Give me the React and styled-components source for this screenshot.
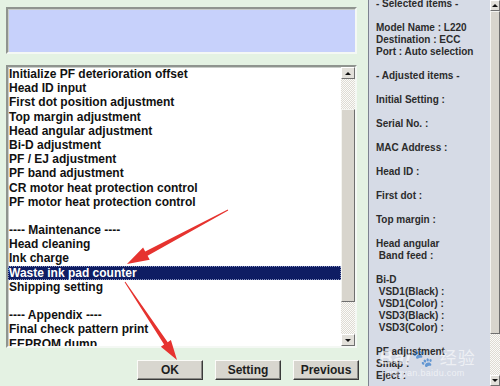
import React from "react";
import styled, { createGlobalStyle } from "styled-components";

const GlobalStyle = createGlobalStyle`
  html, body {
    margin: 0;
    padding: 0;
    background: #e4f2e3;
  }
  body {
    font-family: "Liberation Sans", Arial, sans-serif;
  }
`;

const Window = styled.div`
  position: relative;
  display: flex;
  width: 500px;
  height: 386px;
  overflow: hidden;
`;

const LeftPane = styled.div`
  width: 368px;
  box-sizing: border-box;
  padding: 7px 11px 0 6px;
  background: #e4f2e3;
  display: flex;
  flex-direction: column;
`;

const sunken = `
  border-style: solid;
  border-width: 2px;
  border-color: #8f948f #f4f8f4 #f4f8f4 #8f948f;
  box-shadow: inset 1px 1px 0 #c9cdc9;
`;

const MessageBox = styled.div`
  height: 47px;
  box-sizing: border-box;
  background: #c7d1fb;
  ${sunken}
`;

const ListBox = styled.div`
  margin-top: 11px;
  height: 283px;
  box-sizing: border-box;
  background: #fff;
  display: flex;
  ${sunken}
`;

const Items = styled.div`
  flex: 1;
  overflow: hidden;
`;

const Item = styled.div`
  height: 14.2px;
  line-height: 14.2px;
  font-size: 12px;
  font-weight: bold;
  padding-left: 1px;
  white-space: nowrap;
  background: ${(p) => (p.selected ? "#0f1d63" : "transparent")};
  color: ${(p) => (p.selected ? "#fff" : "#111")};
  outline: ${(p) => (p.selected ? "1px dotted #8a94c0" : "none")};
  outline-offset: -1px;
`;

const ScrollBar = styled.div`
  width: ${(p) => p.w || 14}px;
  display: flex;
  flex-direction: column;
  background: repeating-conic-gradient(#dedbd3 0 25%, #fbfbf9 0 50%) 0 0 / 2px 2px;
  flex-shrink: 0;
`;

const ArrowBtn = styled.div`
  height: ${(p) => p.h || 12}px;
  box-sizing: border-box;
  background: #e2e0da;
  border: 1px solid;
  border-color: #fff #707070 #707070 #fff;
  display: flex;
  align-items: center;
  justify-content: center;
  &::after {
    content: "";
    border-left: 3px solid transparent;
    border-right: 3px solid transparent;
    ${(p) => (p.down ? "border-top" : "border-bottom")}: 3px solid #111;
  }
`;

const Spacer = styled.div`
  height: ${(p) => p.h}px;
  flex-shrink: 0;
`;

const Thumb = styled.div`
  height: ${(p) => p.h}px;
  box-sizing: border-box;
  background: #d8d5cd;
  border: 1px solid;
  border-color: #f4f4f0 #6f6f6f #6f6f6f #f4f4f0;
  flex-shrink: 0;
`;

const ButtonRow = styled.div`
  display: flex;
  justify-content: flex-end;
  gap: 12px;
  margin-top: 12px;
  margin-right: -2px;
`;

const Button = styled.div`
  width: 66px;
  height: 20px;
  box-sizing: border-box;
  background: #d8d6cf;
  border: 1px solid;
  border-color: #fbfbf8 #3a3a3a #3a3a3a #fbfbf8;
  box-shadow: inset -1px -1px 0 #8a8a86;
  display: flex;
  align-items: center;
  justify-content: center;
  font-size: 12px;
  font-weight: bold;
  color: #1e1e1e;
`;

const RightPane = styled.div`
  flex: 1;
  display: flex;
  border-left: 1px solid #7d8290;
  position: relative;
`;

const Info = styled.div`
  flex: 1;
  background: #d6dbe6;
  padding: 0 0 0 7px;
  overflow: hidden;
`;

const InfoText = styled.div`
  margin-top: -2px;
  font-size: 10px;
  line-height: 12px;
  font-weight: bold;
  color: #2c2c2c;
  white-space: pre;
`;

const Watermark = styled.div`
  position: absolute;
  left: 10px;
  top: 348px;
  color: rgba(255, 255, 255, 0.6);
  font-family: "Liberation Sans", "Noto Sans CJK SC", sans-serif;
  pointer-events: none;
  line-height: 1;
`;

const MarkBig = styled.div`
  font-size: 19px;
  font-weight: bold;
  font-style: italic;
  letter-spacing: 1px;
  span {
    font-style: normal;
    font-weight: normal;
    font-size: 17px;
  }
`;

const MarkSmall = styled.div`
  font-size: 9px;
  margin-top: 2px;
  padding-left: 8px;
  letter-spacing: 0.3px;
`;

const Overlay = styled.svg`
  position: absolute;
  left: 0;
  top: 0;
  pointer-events: none;
`;

const items = [
  "Initialize PF deterioration offset",
  "Head ID input",
  "First dot position adjustment",
  "Top margin adjustment",
  "Head angular adjustment",
  "Bi-D adjustment",
  "PF / EJ adjustment",
  "PF band adjustment",
  "CR motor heat protection control",
  "PF motor heat protection control",
  "",
  "---- Maintenance ----",
  "Head cleaning",
  "Ink charge",
  "Waste ink pad counter",
  "Shipping setting",
  "",
  "---- Appendix ----",
  "Final check pattern print",
  "EEPROM dump",
];

const info = `- Selected items -

Model Name : L220
Destination : ECC
Port : Auto selection

- Adjusted items -

Initial Setting :

Serial No. :

MAC Address :

Head ID :

First dot :

Top margin :

Head angular
 Band feed :

Bi-D
 VSD1(Black) :
 VSD1(Color) :
 VSD3(Black) :
 VSD3(Color) :

PF adjustment
Smap :
Eject :`;

export default function App() {
  return (
    <>
      <GlobalStyle />
      <Window>
        <LeftPane>
          <MessageBox />
          <ListBox>
            <Items>
              {items.map((t, i) => (
                <Item key={i} selected={t === "Waste ink pad counter"}>
                  {t || "\u00a0"}
                </Item>
              ))}
            </Items>
            <ScrollBar>
              <ArrowBtn />
              <Spacer h={30} />
              <Thumb h={193} />
              <Spacer h={32} />
              <ArrowBtn down />
            </ScrollBar>
          </ListBox>
          <ButtonRow>
            <Button>OK</Button>
            <Button>Setting</Button>
            <Button>Previous</Button>
          </ButtonRow>
        </LeftPane>
        <RightPane>
          <Info>
            <InfoText>{info}</InfoText>
          </Info>
          <ScrollBar w={10}>
            <ArrowBtn h={11} />
            <Thumb h={323} />
            <Spacer h={41} />
            <ArrowBtn h={11} down />
          </ScrollBar>
          <Watermark>
            <MarkBig>
              Bai<span>🐾</span> <span>经验</span>
            </MarkBig>
            <MarkSmall>jingyan.baidu.com</MarkSmall>
          </Watermark>
        </RightPane>
        <Overlay width="500" height="386" viewBox="0 0 500 386">
          <polygon
            fill="#e6332f"
            points="228.2,210.4 147.6,255.8 149.7,259.8 127,264 143.1,247.4 145.2,251.4 227.8,209.6"
          />
          <polygon
            fill="#e6332f"
            points="124.6,282.3 164.1,344.6 160.9,346.7 177,360 170.9,340.1 167.7,342.2 125.4,281.7"
          />
        </Overlay>
      </Window>
    </>
  );
}
